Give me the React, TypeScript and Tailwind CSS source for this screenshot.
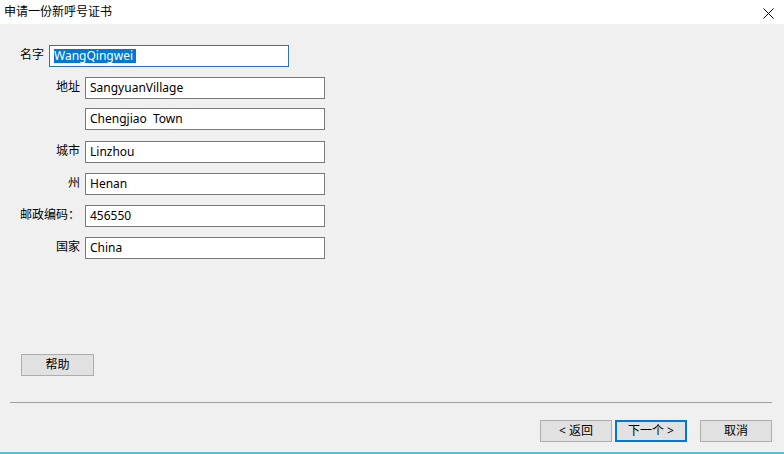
import React from "react";

const font = { fontFamily: '"Noto Sans", "Noto Sans CJK SC", sans-serif' };

function Field({ label, value, labelW = "w-[80px]", gap = "ml-[5px]", mt }: { label: string; value: string; labelW?: string; gap?: string; mt: string }) {
  return (
    <div className={`flex ${mt}`}>
      <div className={`${labelW} shrink-0 text-right text-[12px] leading-[16px] mt-[2px] text-black`}>{label}</div>
      <div className={`${gap} w-[240px] h-[22px] border border-[#7a7a7a] bg-white flex items-center pl-[4px] text-[12px] text-black whitespace-pre`}>{value}</div>
    </div>
  );
}

export default function App() {
  return (
    <div className="w-[784px] h-[454px] bg-[#f0f0f0] flex flex-col overflow-hidden" style={font}>
      <div className="h-[24px] bg-white flex items-center justify-between pl-[4px] pr-[10px] shrink-0">
        <span className="text-[12px] text-black">申请一份新呼号证书</span>
        <svg width="11" height="11" viewBox="0 0 11 11" className="mt-[2px]">
          <path d="M0.5 0.5 L10.5 10.5 M10.5 0.5 L0.5 10.5" stroke="#000" strokeWidth="1" />
        </svg>
      </div>
      <div className="flex flex-col">
        <div className="flex mt-[21px]">
          <div className="w-[44px] shrink-0 text-right text-[12px] leading-[16px] mt-[2px] text-black">名字</div>
          <div className="ml-[5px] w-[240px] h-[22px] border border-[#2a73b5] bg-white flex items-center pl-[4px] text-[12px]">
            <span className="bg-[#0078d7] text-white leading-[14px] pr-[3px]">WangQingwei</span>
          </div>
        </div>
        <Field label="地址" value="SangyuanVillage" mt="mt-[10px]" />
        <Field label="" value="Chengjiao  Town" mt="mt-[9px]" />
        <Field label="城市" value="Linzhou" mt="mt-[11px]" />
        <Field label="州" value="Henan" mt="mt-[10px]" />
        <Field label="邮政编码：" value="456550" mt="mt-[10px]" />
        <Field label="国家" value="China" mt="mt-[10px]" />
      </div>
      <div className="mt-[95px] ml-[21px] w-[73px] h-[22px] border border-[#adadad] bg-[#e1e1e1] flex items-center justify-center text-[12px] text-black">帮助</div>
      <div className="mt-[26px] mx-[10px] h-[1px] bg-[#a0a0a0] w-[762px]" />
      <div className="mt-[17px] flex pl-[540px]">
        <div className="w-[72px] h-[22px] border border-[#adadad] bg-[#e1e1e1] flex items-center justify-center text-[12px] text-black">&lt; 返回</div>
        <div className="ml-[3px] w-[72px] h-[22px] border-2 border-[#0078d7] bg-[#e1e1e1] flex items-center justify-center text-[12px] text-black">下一个 &gt;</div>
        <div className="ml-[13px] w-[72px] h-[22px] border border-[#adadad] bg-[#e1e1e1] flex items-center justify-center text-[12px] text-black">取消</div>
      </div>
      <div className="mt-auto h-[2px] bg-[#4cc6cc] w-full" />
    </div>
  );
}
